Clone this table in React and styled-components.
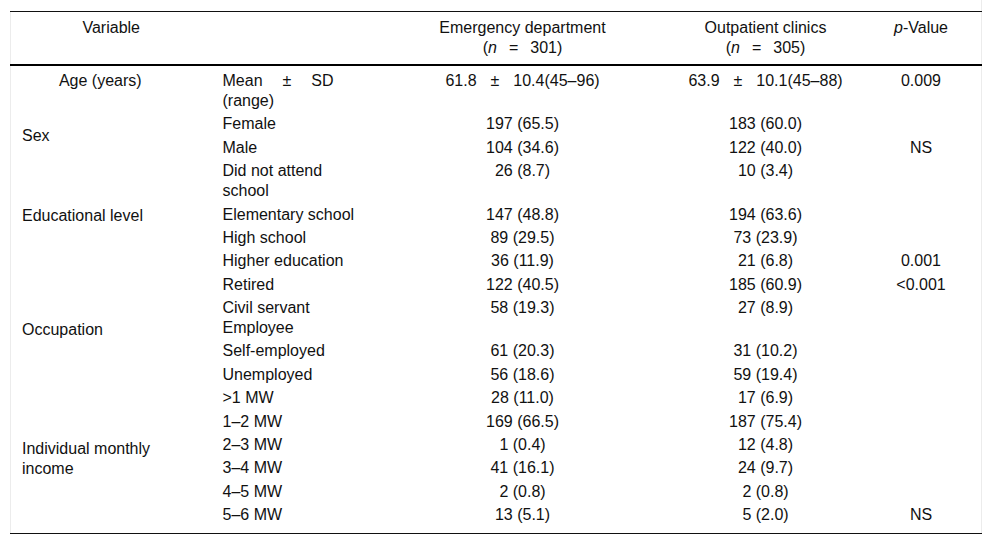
import React from 'react';
import styled, { createGlobalStyle } from 'styled-components';

const GlobalStyle = createGlobalStyle`
  html, body {
    margin: 0;
    padding: 0;
    background: #fff;
  }
  body {
    font-family: "Liberation Sans", Arial, sans-serif;
    font-size: 16px;
    color: #111;
  }
`;

const Frame = styled.div`
  width: 971px;
  margin-left: 10px;
  padding-top: 11px;
  border-right: 1px solid #ececec;
`;

const Table = styled.table`
  width: 971px;
  border-collapse: collapse;
  table-layout: fixed;
  border-left: 1px solid #ececec;
  border-top: 1px solid #111;
  border-bottom: 1px solid #111;
  line-height: 20px;
`;

const HeadRow = styled.tr`
  border-bottom: 2px solid #000;
`;

const HeadCell = styled.th`
  font-weight: normal;
  text-align: center;
  vertical-align: top;
  padding: 6px 11px;
`;

const Cell = styled.td`
  text-align: ${(p) => p.$align || 'center'};
  vertical-align: ${(p) => p.$valign || 'top'};
  padding: ${(p) => (p.$first ? '5px' : '1.7px')} ${(p) => p.$padRight || '11px'}
    ${(p) => (p.$last ? '7.5px' : '1.7px')} 11px;
`;

const Op = styled.span`
  margin: 0 ${(p) => p.$gap || 14}px;
`;

const Wrap = styled.span`
  display: inline-block;
  max-width: ${(p) => p.$max}px;
`;

const rows = [
  { label: 'Sex', span: 2, cat: 'Female', ed: '197 (65.5)', op: '183 (60.0)' },
  { cat: 'Male', ed: '104 (34.6)', op: '122 (40.0)', p: 'NS' },
  { label: 'Educational level', span: 4, cat: 'Did not attend school', ed: '26 (8.7)', op: '10 (3.4)' },
  { cat: 'Elementary school', ed: '147 (48.8)', op: '194 (63.6)' },
  { cat: 'High school', ed: '89 (29.5)', op: '73 (23.9)' },
  { cat: 'Higher education', ed: '36 (11.9)', op: '21 (6.8)', p: '0.001' },
  { label: 'Occupation', span: 4, cat: 'Retired', ed: '122 (40.5)', op: '185 (60.9)', p: '<0.001' },
  { cat: 'Civil servant Employee', ed: '58 (19.3)', op: '27 (8.9)' },
  { cat: 'Self-employed', ed: '61 (20.3)', op: '31 (10.2)' },
  { cat: 'Unemployed', ed: '56 (18.6)', op: '59 (19.4)' },
  { label: 'Individual monthly income', span: 6, cat: '>1 MW', ed: '28 (11.0)', op: '17 (6.9)' },
  { cat: '1–2 MW', ed: '169 (66.5)', op: '187 (75.4)' },
  { cat: '2–3 MW', ed: '1 (0.4)', op: '12 (4.8)' },
  { cat: '3–4 MW', ed: '41 (16.1)', op: '24 (9.7)' },
  { cat: '4–5 MW', ed: '2 (0.8)', op: '2 (0.8)' },
  { cat: '5–6 MW', ed: '13 (5.1)', op: '5 (2.0)', p: 'NS' },
];

export default function App() {
  return (
    <>
      <GlobalStyle />
      <Frame>
        <Table>
          <colgroup>
            <col style={{ width: 201 }} />
            <col style={{ width: 163 }} />
            <col style={{ width: 296 }} />
            <col style={{ width: 190 }} />
            <col style={{ width: 121 }} />
          </colgroup>
          <thead>
            <HeadRow>
              <HeadCell>Variable</HeadCell>
              <HeadCell />
              <HeadCell>
                Emergency department
                <br />
                (<i>n</i><Op $gap={12}>=</Op>301)
              </HeadCell>
              <HeadCell>
                Outpatient clinics
                <br />
                (<i>n</i><Op $gap={12}>=</Op>305)
              </HeadCell>
              <HeadCell>
                <i>p</i>-Value
              </HeadCell>
            </HeadRow>
          </thead>
          <tbody>
            <tr>
              <Cell $first $padRight="33px">Age (years)</Cell>
              <Cell $first $align="left">
                <span>Mean</span>
                <Op $gap={20}>±</Op>
                <span>SD</span>{' '}
                <span>(range)</span>
              </Cell>
              <Cell $first>
                61.8<Op>±</Op>10.4(45–96)
              </Cell>
              <Cell $first>
                63.9<Op>±</Op>10.1(45–88)
              </Cell>
              <Cell $first>0.009</Cell>
            </tr>
            {rows.map((r, i) => {
              const last = i === rows.length - 1;
              return (
                <tr key={r.cat}>
                  {r.label && (
                    <Cell rowSpan={r.span} $align="left" $valign="middle" $last={last}>
                      <Wrap $max={150}>{r.label}</Wrap>
                    </Cell>
                  )}
                  <Cell $align="left" $last={last}>
                    <Wrap $max={140}>{r.cat}</Wrap>
                  </Cell>
                  <Cell $last={last}>{r.ed}</Cell>
                  <Cell $last={last}>{r.op}</Cell>
                  <Cell $last={last}>{r.p || ''}</Cell>
                </tr>
              );
            })}
          </tbody>
        </Table>
      </Frame>
    </>
  );
}
